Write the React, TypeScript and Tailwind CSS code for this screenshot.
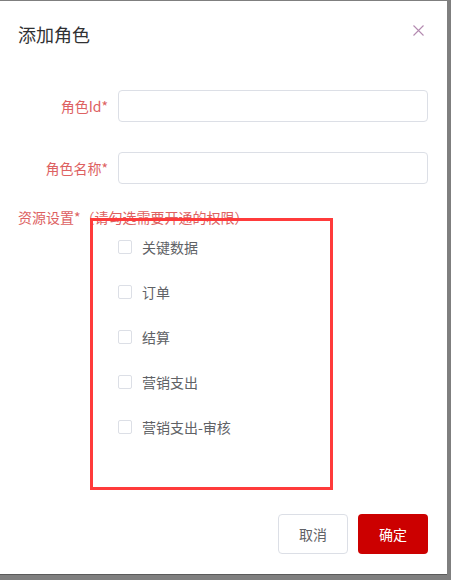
const font = { fontFamily: '"Noto Sans CJK SC", "Noto Sans", sans-serif' };

const resources = ["关键数据", "订单", "结算", "营销支出", "营销支出-审核"];

function Field({ label }: { label: string }) {
  return (
    <div className="flex items-center">
      <label className="w-[110px] pr-[2px] text-right text-[14px] text-[#dd6161]">{label}</label>
      <input
        type="text"
        className="ml-[8px] h-[32px] w-[310px] rounded-[4px] border border-[#dcdfe6] bg-white px-3 text-[14px] outline-none"
      />
    </div>
  );
}

export default function App() {
  return (
    <div className="h-[580px] w-[451px] bg-[#7f7f7f] pt-[1px]" style={font}>
      <div className="relative flex h-[574px] w-[447px] flex-col border-b border-[#5a5a5a] bg-white">
        <div className="flex items-start justify-between pl-[18px] pr-[23px] pt-[21px]">
          <h1 className="text-[18px] leading-[24px] text-[#303133]">添加角色</h1>
          <button className="mt-[2px] flex h-[12px] w-[12px] items-center justify-center">
            <svg width="11" height="11" viewBox="0 0 11 11" fill="none">
              <path d="M0.5 0.5L10.5 10.5M10.5 0.5L0.5 10.5" stroke="#b48ab0" strokeWidth="1.1" />
            </svg>
          </button>
        </div>

        <div className="mt-[44px] flex flex-col gap-[30px]">
          <Field label="角色Id*" />
          <Field label="角色名称*" />
        </div>

        <p className="mt-[23px] pl-[18px] text-[14px] leading-[20px] text-[#dd6161]">
          资源设置*（请勾选需要开通的权限）
        </p>

        <ul className="mt-[10px] flex flex-col gap-[25px] pl-[118px]">
          {resources.map((name) => (
            <li key={name} className="flex h-[20px] items-center">
              <span className="h-[14px] w-[14px] rounded-[2px] border border-[#dcdfe6] bg-white" />
              <span className="ml-[10px] text-[14px] text-[#606266]">{name}</span>
            </li>
          ))}
        </ul>

        <div className="mt-auto flex justify-end gap-[10px] pb-[20px] pr-[19px]">
          <button className="h-[40px] w-[70px] rounded-[4px] border border-[#dcdfe6] bg-white text-[14px] text-[#606266]">
            取消
          </button>
          <button className="h-[40px] w-[70px] rounded-[4px] bg-[#cc0000] text-[14px] text-white">
            确定
          </button>
        </div>

        <div className="pointer-events-none absolute left-[90px] top-[217px] h-[272px] w-[243px] border-[3px] border-[#ff3b3b]" />
      </div>
    </div>
  );
}
